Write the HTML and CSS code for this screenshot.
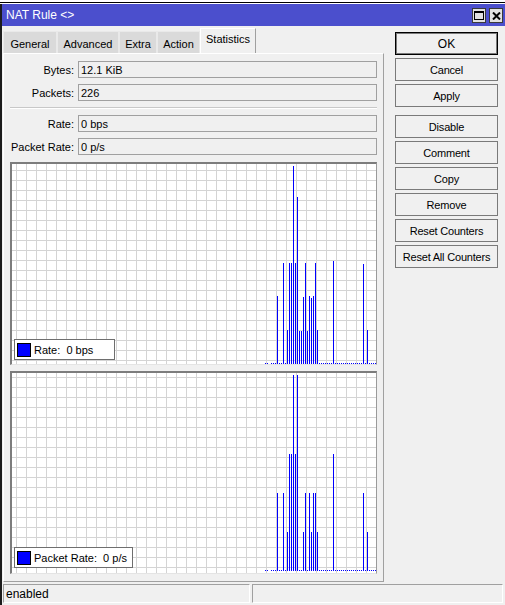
FILE: index.html
```html
<!DOCTYPE html>
<html>
<head>
<meta charset="utf-8">
<link rel="stylesheet" href="styles.css">
</head>
<body>
<div class="desk"></div>
<div class="window">
  <div class="titlebar">
    <span class="title">NAT Rule &lt;&gt;</span>
    <div class="title-btns">
      <span class="tbtn"><svg width="10" height="9" viewBox="0 0 10 9"><rect x="0.5" y="0.5" width="9" height="8" fill="none" stroke="#000"/><rect x="0" y="0" width="10" height="2" fill="#000"/></svg></span>
      <span class="tbtn"><svg width="9" height="8" viewBox="0 0 9 8"><path d="M1 0.5 L8 7.5 M8 0.5 L1 7.5" stroke="#000" stroke-width="2"/></svg></span>
    </div>
  </div>
  <div class="main">
    <div class="left">
      <div class="tabs">
        <div class="tab t-general">General</div>
        <div class="tab t-advanced">Advanced</div>
        <div class="tab t-extra">Extra</div>
        <div class="tab t-action">Action</div>
        <div class="tab t-stats active">Statistics</div>
      </div>
      <div class="panel">
        <div class="row"><span class="lbl">Bytes:</span><span class="field">12.1 KiB</span></div>
        <div class="row"><span class="lbl">Packets:</span><span class="field">226</span></div>
        <div class="sep"></div>
        <div class="row"><span class="lbl">Rate:</span><span class="field">0 bps</span></div>
        <div class="row row-last"><span class="lbl">Packet Rate:</span><span class="field">0 p/s</span></div>

        <div class="graph">
          <svg class="plot" width="364" height="200" viewBox="0 0 364 200">
            <defs>
              <pattern id="grid1" x="4" y="6" width="10" height="10" patternUnits="userSpaceOnUse">
                <rect x="0" y="0" width="1" height="10" fill="#d4d4d4"/>
                <rect x="0" y="0" width="10" height="1" fill="#d4d4d4"/>
              </pattern>
            </defs>
            <rect width="364" height="200" fill="#fff"/>
            <rect width="364" height="200" fill="url(#grid1)"/>
            <g fill="#0000ff">
              <rect x="265" y="132" width="1" height="68"/>
              <rect x="271" y="99" width="1" height="101"/>
              <rect x="275" y="166" width="1" height="34"/>
              <rect x="277" y="99" width="1" height="101"/>
              <rect x="279" y="99" width="1" height="101"/>
              <rect x="281" y="2" width="1" height="198"/>
              <rect x="283" y="99" width="1" height="101"/>
              <rect x="285" y="33" width="1" height="167"/>
              <rect x="287" y="167" width="1" height="33"/>
              <rect x="289" y="167" width="1" height="33"/>
              <rect x="291" y="133" width="1" height="67"/>
              <rect x="293" y="99" width="1" height="101"/>
              <rect x="295" y="167" width="1" height="33"/>
              <rect x="297" y="132" width="1" height="68"/>
              <rect x="299" y="134" width="1" height="66"/>
              <rect x="301" y="132" width="1" height="68"/>
              <rect x="303" y="99" width="1" height="101"/>
              <rect x="305" y="166" width="1" height="34"/>
              <rect x="321" y="97" width="1" height="103"/>
              <rect x="351" y="100" width="1" height="100"/>
              <rect x="355" y="166" width="1" height="34"/>
              <rect x="253" y="199" width="1" height="1"/>
              <rect x="255" y="199" width="1" height="1"/>
              <rect x="259" y="199" width="1" height="1"/>
              <rect x="261" y="199" width="1" height="1"/>
              <rect x="263" y="199" width="1" height="1"/>
              <rect x="267" y="199" width="1" height="1"/>
              <rect x="269" y="199" width="1" height="1"/>
              <rect x="273" y="199" width="1" height="1"/>
              <rect x="307" y="199" width="1" height="1"/>
              <rect x="309" y="199" width="1" height="1"/>
              <rect x="311" y="199" width="1" height="1"/>
              <rect x="313" y="199" width="1" height="1"/>
              <rect x="315" y="199" width="1" height="1"/>
              <rect x="317" y="199" width="1" height="1"/>
              <rect x="319" y="199" width="1" height="1"/>
              <rect x="323" y="199" width="1" height="1"/>
              <rect x="325" y="199" width="1" height="1"/>
              <rect x="327" y="199" width="1" height="1"/>
              <rect x="329" y="199" width="1" height="1"/>
              <rect x="331" y="199" width="1" height="1"/>
              <rect x="333" y="199" width="1" height="1"/>
              <rect x="335" y="199" width="1" height="1"/>
              <rect x="337" y="199" width="1" height="1"/>
              <rect x="339" y="199" width="1" height="1"/>
              <rect x="341" y="199" width="1" height="1"/>
              <rect x="343" y="199" width="1" height="1"/>
              <rect x="345" y="199" width="1" height="1"/>
              <rect x="347" y="199" width="1" height="1"/>
              <rect x="349" y="199" width="1" height="1"/>
              <rect x="353" y="199" width="1" height="1"/>
              <rect x="357" y="199" width="1" height="1"/>
              <rect x="359" y="199" width="1" height="1"/>
              <rect x="361" y="199" width="1" height="1"/>
              <rect x="363" y="199" width="1" height="1"/>
            </g>
          </svg>
          <div class="legend legend-rate"><span class="swatch"></span><span>Rate:&nbsp; 0 bps</span></div>
        </div>

        <div class="graph graph2">
          <svg class="plot" width="364" height="200" viewBox="0 0 364 200">
            <defs>
              <pattern id="grid2" x="4" y="4" width="10" height="10" patternUnits="userSpaceOnUse">
                <rect x="0" y="0" width="1" height="10" fill="#d4d4d4"/>
                <rect x="0" y="0" width="10" height="1" fill="#d4d4d4"/>
              </pattern>
            </defs>
            <rect width="364" height="200" fill="#fff"/>
            <rect width="364" height="200" fill="url(#grid2)"/>
            <g fill="#0000ff">
              <rect x="265" y="120" width="1" height="78"/>
              <rect x="271" y="120" width="1" height="78"/>
              <rect x="275" y="159" width="1" height="39"/>
              <rect x="277" y="81" width="1" height="117"/>
              <rect x="279" y="81" width="1" height="117"/>
              <rect x="281" y="2" width="1" height="196"/>
              <rect x="283" y="81" width="1" height="117"/>
              <rect x="285" y="2" width="1" height="196"/>
              <rect x="291" y="159" width="1" height="39"/>
              <rect x="293" y="120" width="1" height="78"/>
              <rect x="297" y="120" width="1" height="78"/>
              <rect x="299" y="159" width="1" height="39"/>
              <rect x="301" y="120" width="1" height="78"/>
              <rect x="303" y="120" width="1" height="78"/>
              <rect x="305" y="159" width="1" height="39"/>
              <rect x="321" y="81" width="1" height="117"/>
              <rect x="351" y="120" width="1" height="78"/>
              <rect x="355" y="159" width="1" height="39"/>
              <rect x="253" y="197" width="1" height="1"/>
              <rect x="255" y="197" width="1" height="1"/>
              <rect x="259" y="197" width="1" height="1"/>
              <rect x="261" y="197" width="1" height="1"/>
              <rect x="263" y="197" width="1" height="1"/>
              <rect x="267" y="197" width="1" height="1"/>
              <rect x="269" y="197" width="1" height="1"/>
              <rect x="273" y="197" width="1" height="1"/>
              <rect x="287" y="197" width="1" height="1"/>
              <rect x="289" y="197" width="1" height="1"/>
              <rect x="295" y="197" width="1" height="1"/>
              <rect x="307" y="197" width="1" height="1"/>
              <rect x="309" y="197" width="1" height="1"/>
              <rect x="311" y="197" width="1" height="1"/>
              <rect x="313" y="197" width="1" height="1"/>
              <rect x="315" y="197" width="1" height="1"/>
              <rect x="317" y="197" width="1" height="1"/>
              <rect x="319" y="197" width="1" height="1"/>
              <rect x="323" y="197" width="1" height="1"/>
              <rect x="325" y="197" width="1" height="1"/>
              <rect x="327" y="197" width="1" height="1"/>
              <rect x="329" y="197" width="1" height="1"/>
              <rect x="331" y="197" width="1" height="1"/>
              <rect x="333" y="197" width="1" height="1"/>
              <rect x="335" y="197" width="1" height="1"/>
              <rect x="337" y="197" width="1" height="1"/>
              <rect x="339" y="197" width="1" height="1"/>
              <rect x="341" y="197" width="1" height="1"/>
              <rect x="343" y="197" width="1" height="1"/>
              <rect x="345" y="197" width="1" height="1"/>
              <rect x="347" y="197" width="1" height="1"/>
              <rect x="349" y="197" width="1" height="1"/>
              <rect x="353" y="197" width="1" height="1"/>
              <rect x="357" y="197" width="1" height="1"/>
              <rect x="359" y="197" width="1" height="1"/>
              <rect x="361" y="197" width="1" height="1"/>
              <rect x="363" y="197" width="1" height="1"/>
            </g>
          </svg>
          <div class="legend legend-prate"><span class="swatch"></span><span>Packet Rate:&nbsp; 0 p/s</span></div>
        </div>
      </div>
    </div>
    <div class="buttons">
      <div class="btn default">OK</div>
      <div class="btn">Cancel</div>
      <div class="btn">Apply</div>
      <div class="btn group">Disable</div>
      <div class="btn">Comment</div>
      <div class="btn">Copy</div>
      <div class="btn">Remove</div>
      <div class="btn">Reset Counters</div>
      <div class="btn">Reset All Counters</div>
    </div>
  </div>
  <div class="status">
    <div class="pane pane1">enabled</div>
    <div class="pane pane2"></div>
  </div>
</div>
</body>
</html>
```

FILE: styles.css
```css
html, body {
  margin: 0;
  padding: 0;
  background: #fff;
}
body {
  font-family: "Liberation Sans", Arial, sans-serif;
  font-size: 11px;
  color: #000;
  width: 505px;
  height: 605px;
  overflow: hidden;
}
.desk {
  height: 4px;
  background: linear-gradient(#fff 0 2px, #000 2px 3px, #fff 3px 4px);
}
.window {
  height: 601px;
  border-left: 2px solid #1c1c1c;
  background: #f0f0f0;
  display: flex;
  flex-direction: column;
  box-sizing: border-box;
}
.titlebar {
  height: 22px;
  background: #4b4fcd;
  color: #fff;
  display: flex;
  align-items: center;
  padding-left: 4px;
  flex: none;
}
.title {
  font-size: 12px;
}
.title-btns {
  margin-left: auto;
  margin-right: 2px;
  display: flex;
  gap: 3px;
  padding-top: 1px;
}
.tbtn {
  width: 12px;
  height: 13px;
  background: #e1e1e1;
  border: 1px solid #3a3a3a;
  display: flex;
  align-items: center;
  justify-content: center;
}
.main {
  display: flex;
  padding: 2px 0 0 1px;
  flex: none;
}
.left {
  width: 381px;
  display: flex;
  flex-direction: column;
}
.tabs {
  display: flex;
  align-items: flex-end;
  height: 25px;
}
.tab {
  height: 22px;
  box-sizing: border-box;
  background: #dadada;
  border: 1px solid #e9e9e9;
  border-bottom: none;
  display: flex;
  align-items: center;
  justify-content: center;
  padding-top: 2px;
}
.t-general { width: 54px; }
.t-advanced { width: 62px; }
.t-extra { width: 38px; }
.t-action { width: 43px; }
.t-stats { width: 56px; }
.tab.active {
  height: 25px;
  background: #f0f0f0;
  border-left: 1px solid #fff;
  border-top: 1px solid #fff;
  border-right: 1px solid #a0a0a0;
  padding-top: 0;
  padding-bottom: 4px;
}
.panel {
  height: 529px;
  box-sizing: border-box;
  border-top: 1px solid #fff;
  border-left: 1px solid #fff;
  border-right: 1px solid #a0a0a0;
  border-bottom: 1px solid #a0a0a0;
  padding: 7px 6px 6px 0;
  display: flex;
  flex-direction: column;
}
.row {
  display: flex;
  align-items: center;
  height: 17px;
  margin-bottom: 6px;
}
.row-last {
  margin-bottom: 7px;
}
.lbl {
  width: 70px;
  text-align: right;
  margin-right: 4px;
  flex: none;
}
.field {
  flex: 1;
  height: 17px;
  box-sizing: border-box;
  border: 1px solid #a0a0a0;
  background: #f0f0f0;
  padding-left: 2px;
  display: flex;
  align-items: center;
}
.sep {
  margin: 0 0 6px 6px;
  border-top: 1px solid #c8c8c8;
  border-bottom: 1px solid #fff;
}
.graph {
  position: relative;
  margin-left: 6px;
  width: 367px;
  height: 203px;
  box-sizing: border-box;
  border-top: 2px solid #7c7c7c;
  border-left: 2px solid #7c7c7c;
  border-right: 1px solid #9a9a9a;
  border-bottom: 1px solid #e4e4e4;
  margin-right: -1px;
}
.graph2 {
  margin-top: 6px;
}
.plot {
  display: block;
}
.legend {
  position: absolute;
  left: 2px;
  bottom: 4px;
  height: 21px;
  box-sizing: border-box;
  background: #fff;
  border: 1px solid #6e6e6e;
  display: flex;
  align-items: center;
  padding-left: 2px;
  gap: 3px;
}
.legend-rate { width: 101px; }
.legend-prate { width: 119px; bottom: 5px; }
.swatch {
  width: 14px;
  height: 14px;
  box-sizing: border-box;
  background: #0000ff;
  border: 1px solid #000;
}
.buttons {
  margin-left: 11px;
  padding-top: 4px;
  width: 103px;
  display: flex;
  flex-direction: column;
  gap: 3px;
}
.btn {
  height: 23px;
  box-sizing: border-box;
  border: 1px solid #7a7a7a;
  background: #f0f0f0;
  display: flex;
  align-items: center;
  justify-content: center;
  letter-spacing: -0.2px;
}
.btn.default {
  border: 1px solid #000;
  box-shadow: inset 0 0 0 1px #7a7a7a;
  font-size: 12px;
  letter-spacing: 0;
}
.btn.group {
  margin-top: 5px;
}
.status {
  display: flex;
  margin: 2px 2px 0 1px;
  height: 19px;
  gap: 2px;
  flex: none;
}
.pane {
  box-sizing: border-box;
  height: 19px;
  border-top: 1px solid #a0a0a0;
  border-left: 1px solid #a0a0a0;
  border-right: 1px solid #fff;
  border-bottom: 1px solid #fff;
  display: flex;
  align-items: center;
  padding-left: 2px;
  font-size: 12px;
}
.pane1 { width: 247px; }
.pane2 { flex: 1; }
```
